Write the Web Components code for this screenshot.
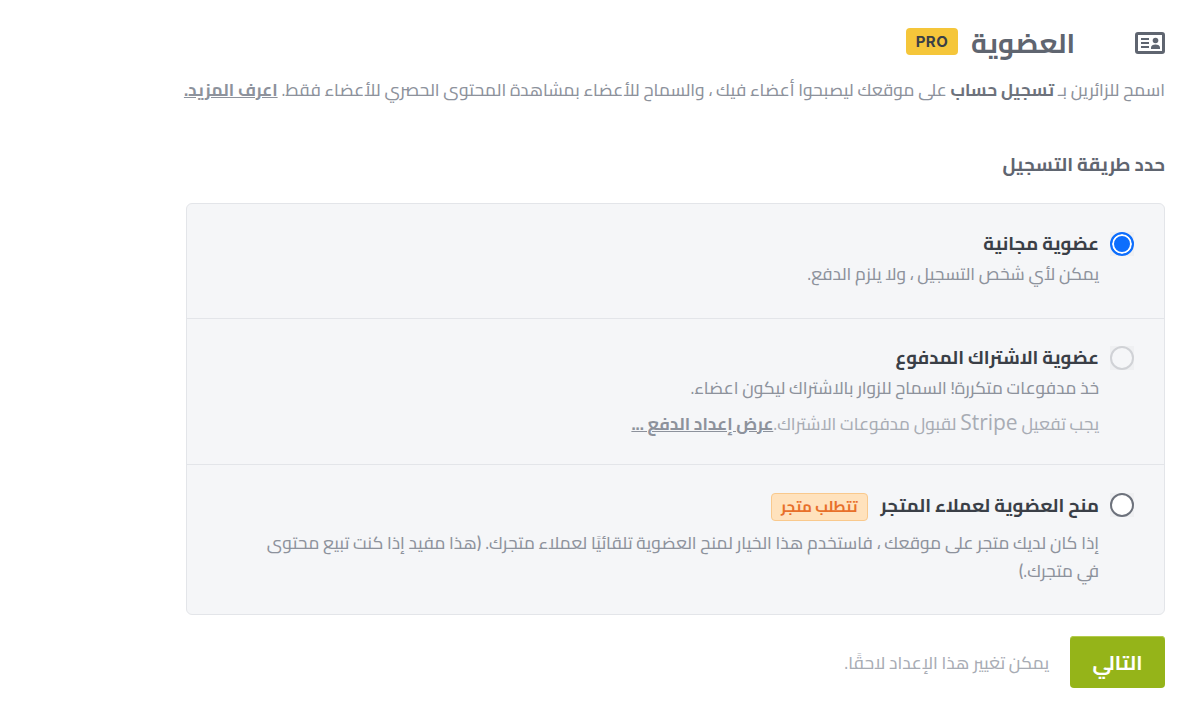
<!DOCTYPE html>
<html lang="ar" dir="rtl">
<head>
<meta charset="utf-8">
<title>العضوية</title>
<style>
  html, body { margin: 0; background: #fff; }
  body { font-family: Cairo, "DejaVu Sans", sans-serif; color: #5f6570; }
</style>
</head>
<body>
<membership-page>
  <page-header slot="header"></page-header>
  <option-list>
    <option-row state="checked" pad="free" title-text="عضوية مجانية">
      <p-line>يمكن لأي شخص التسجيل ، ولا يلزم الدفع.</p-line>
    </option-row>
    <option-row state="disabled" title-text="عضوية الاشتراك المدفوع" pad="paid">
      <p-line>خذ مدفوعات متكررة! السماح للزوار بالاشتراك ليكون اعضاء.</p-line>
      <p-line tone="muted">يجب تفعيل <span>Stripe</span> لقبول مدفوعات الاشتراك.<a>عرض إعداد الدفع ...</a></p-line>
    </option-row>
    <option-row state="empty" title-text="منح العضوية لعملاء المتجر" tag="تتطلب متجر">
      <p-line tone="spaced">إذا كان لديك متجر على موقعك ، فاستخدم هذا الخيار لمنح العضوية تلقائيًا لعملاء متجرك. (هذا مفيد إذا كنت تبيع محتوى في متجرك.)</p-line>
    </option-row>
  </option-list>
  <page-footer></page-footer>
</membership-page>

<script>
class MembershipPage extends HTMLElement {
  constructor() {
    super();
    this.attachShadow({ mode: 'open' });
    this.shadowRoot.innerHTML = `
      <style>
        :host { display: block; padding: 28px 35px 0 0; width: 979px; }
        p { margin: 18px 0 0; font-size: 17.250px; line-height: 28px; font-weight: 500; color: #8d929c; white-space: nowrap; }
        b { color: #6d727c; font-weight: 700; }
        a { color: #8d929c; text-decoration: underline; font-weight: 700; }
        h3 { margin: 47px 0 24px; font-size: 18.700px; line-height: 28px; font-weight: 700; color: #5f6570; }
      </style>
      <slot name="header"></slot>
      <p>اسمح للزائرين بـ <b>تسجيل حساب</b> على موقعك ليصبحوا أعضاء فيك ، والسماح للأعضاء بمشاهدة المحتوى الحصري للأعضاء فقط. <a>اعرف المزيد.</a></p>
      <h3>حدد طريقة التسجيل</h3>
      <slot></slot>
    `;
  }
}

class PageHeader extends HTMLElement {
  constructor() {
    super();
    this.attachShadow({ mode: 'open' });
    this.shadowRoot.innerHTML = `
      <style>
        :host { display: flex; align-items: center; height: 30px; }
        svg { width: 30px; height: 24px; flex: none; margin-left: 60px; }
        h1 { margin: 0 0 0 13px; font-size: 27.500px; line-height: 30px; font-weight: 700; color: #5f6570; }
        .pro { width: 52px; height: 27px; margin-top: -4px; border-radius: 4px; background: #f5c63a;
          color: #3a3f47; font: 700 15px/27px Inter, sans-serif; text-align: center; letter-spacing: .5px; }
      </style>
      <svg viewBox="0 0 30 24" fill="none" stroke="#5f6570">
        <rect x="1.500" y="2.500" width="27" height="19" rx="1.500" stroke-width="3"/>
        <path d="M6 8h8M6 12h8M6 16h8" stroke-width="2"/>
        <circle cx="20.500" cy="9.500" r="2.800" fill="#5f6570" stroke="none"/>
        <path d="M16 18v-1.500c0-2 2-3 4.500-3s4.500 1 4.500 3V18z" fill="#5f6570" stroke="none"/>
      </svg>
      <h1>العضوية</h1>
      <span class="pro" dir="ltr">PRO</span>
    `;
  }
}

class OptionList extends HTMLElement {
  constructor() {
    super();
    this.attachShadow({ mode: 'open' });
    this.shadowRoot.innerHTML = `
      <style>
        :host { display: block; border: 1px solid #e3e5e9; border-radius: 6px; background: #f5f6f8; }
        ::slotted(option-row:not(:last-child)) { border-bottom: 1px solid #e3e5e9; }
      </style>
      <slot></slot>
    `;
  }
}

class OptionRow extends HTMLElement {
  constructor() {
    super();
    this.attachShadow({ mode: 'open' });
    const state = this.getAttribute('state');
    const tag = this.getAttribute('tag');
    this.shadowRoot.innerHTML = `
      <style>
        :host { display: flex; gap: 11px; padding: 28px 30px 29px 55px; align-items: flex-start; }
        :host([pad="free"]) { padding-bottom: 30px; }
        :host([pad="paid"]) { padding-top: 27px; padding-bottom: 26px; }
        :host([pad]) .name { margin-top: -6px; }
        :host([tag]) .name { margin-top: -4px; }
        .box { flex: none; width: 24px; height: 24px; background: #eff0f2; }
        .radio { width: 24px; height: 24px; box-sizing: border-box; border-radius: 50%; background: #fff; border: 2px solid #6d727c; }
        .radio.checked { border-color: #0d6efd; background: #0d6efd; box-shadow: inset 0 0 0 2px #fff; }
        .radio.disabled { border: 2px solid #d0d2d6; background: #f5f6f8; }
        .body { flex: 1; min-width: 0; }
        .title { display: flex; align-items: center; gap: 13px; height: 28px; font-size: 18.500px; font-weight: 700; color: #3a3f47; }
        .tag { box-sizing: border-box; height: 28px; padding: 0 9px; line-height: 26px; font-size: 15px; font-weight: 700; color: #e8702a;
          background: #ffe2bd; border: 1px solid #f9c98d; border-radius: 4px; }
      </style>
      <div class="box"><div class="radio ${state}"></div></div>
      <div class="body">
        <div class="title"><span class="name">${this.getAttribute('title-text')}</span>${tag ? `<span class="tag">${tag}</span>` : ''}</div>
        <slot></slot>
      </div>
    `;
  }
}

class PLine extends HTMLElement {
  constructor() {
    super();
    this.attachShadow({ mode: 'open' });
    this.shadowRoot.innerHTML = `
      <style>
        :host { display: block; font-size: 17.200px; line-height: 28px; font-weight: 500; color: #8d929c; }
        :host([tone="muted"]) { color: #a8acb4; margin-top: 8px; }
        :host([tone="spaced"]) { margin-top: 8px; }
        ::slotted(a) { color: #8d929c; font-weight: 700; text-decoration: underline; }
        ::slotted(span) { font-family: "Open Sans", sans-serif; font-size: 21px; font-weight: 400; line-height: 1; }
      </style>
      <slot></slot>
    `;
  }
}

class PageFooter extends HTMLElement {
  constructor() {
    super();
    this.attachShadow({ mode: 'open' });
    this.shadowRoot.innerHTML = `
      <style>
        :host { display: flex; align-items: center; gap: 21px; margin-top: 21px; }
        button { width: 95px; height: 52px; border: 0; border-radius: 4px; background: #95b419; color: #fff;
          font: 700 20px Cairo, "DejaVu Sans", sans-serif; box-shadow: inset 0 1px 0 #b4cc4d; }
        span { font-size: 17.300px; font-weight: 500; color: #a8acb4; }
      </style>
      <button>التالي</button>
      <span>يمكن تغيير هذا الإعداد لاحقًا.</span>
    `;
  }
}

customElements.define('membership-page', MembershipPage);
customElements.define('page-header', PageHeader);
customElements.define('option-list', OptionList);
customElements.define('option-row', OptionRow);
customElements.define('p-line', PLine);
customElements.define('page-footer', PageFooter);
</script>
</body>
</html>
